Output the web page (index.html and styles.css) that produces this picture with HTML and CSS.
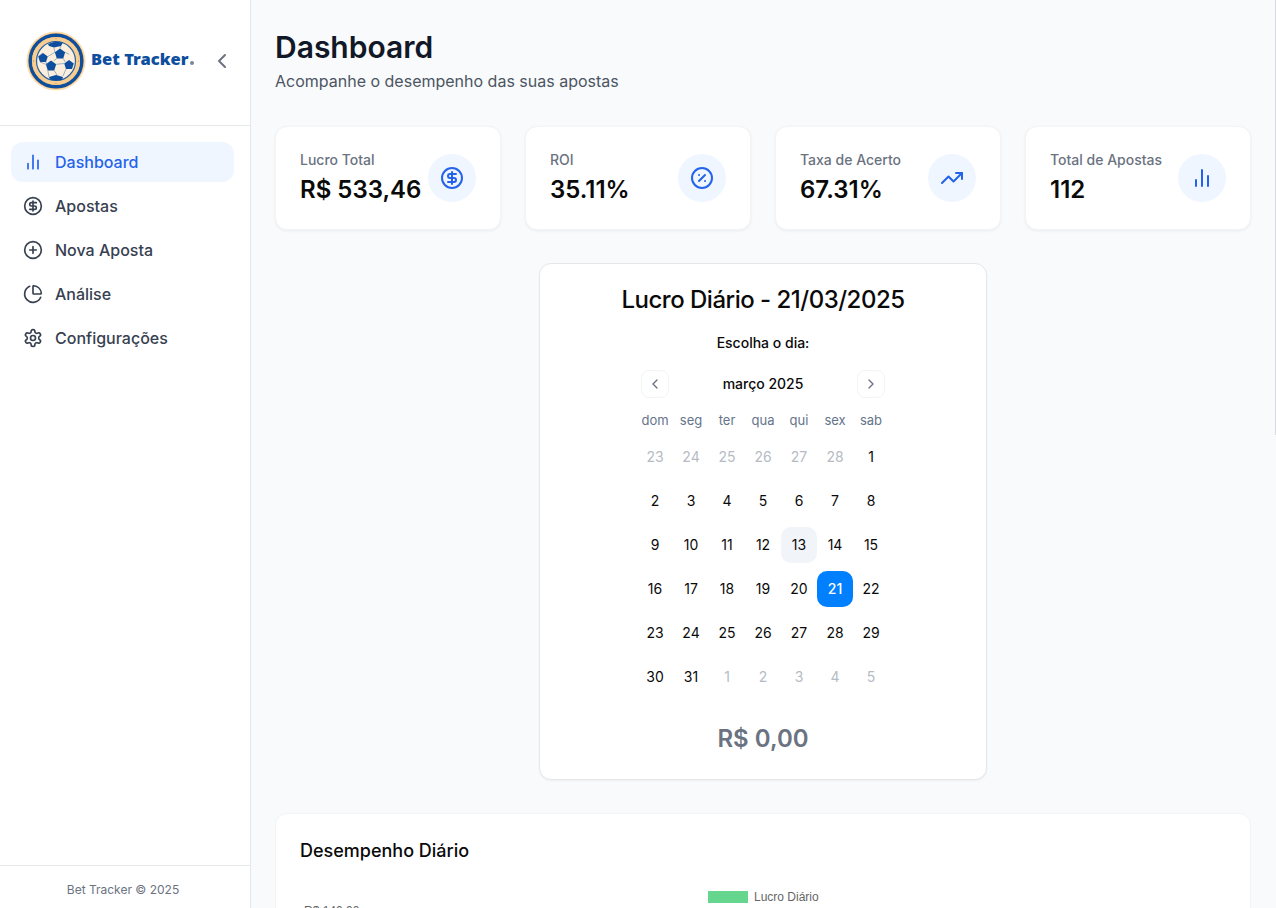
FILE: index.html
```html
<!DOCTYPE html>
<html lang="pt-BR">

<head>
  <meta charset="UTF-8">
  <meta name="viewport" content="width=device-width, initial-scale=1.0">
  <title>Bet Tracker - Dashboard</title>
  <link rel="stylesheet" href="styles.css">
</head>

<body>
  <div class="app">
    <aside class="sidebar">
      <div class="sidebar-header">
        <div class="logo">
          <svg class="logo-ball" viewBox="0 0 60 60" width="60" height="60">
            <circle cx="30" cy="30" r="29.5" fill="#fbdcae" />
            <circle cx="30" cy="30" r="28" fill="#f4b25f" />
            <circle cx="30" cy="30" r="25.8" fill="none" stroke="#0d4f9e" stroke-width="3.4" />
            <circle cx="30" cy="30" r="24" fill="#f7cd92" />
            <circle cx="30" cy="30" r="19.5" fill="#fbeedd" stroke="#2a639f" stroke-width="1.2" />
            <g fill="#9a8a68">
              <circle cx="30" cy="7.5" r=".6" />
              <circle cx="30" cy="52.5" r=".6" />
              <circle cx="7.5" cy="30" r=".6" />
              <circle cx="52.5" cy="30" r=".6" />
            </g>
            <g fill="#0d4f9e">
              <path d="M34 17.5l5.2 3.8-2 6.100h-6.400l-2-6.100z" />
              <path d="M17 22l4.800 3.500-1.800 5.500h-6l-1.800-5.500z" />
              <path d="M25 29.500l5.200 3.800-2 6.100h-6.400l-2-6.100z" />
              <path d="M43 29l4.800 3.500-1.800 5.500h-6l-1.800-5.500z" />
              <path d="M22 13l7-2.400 8 .9-2 3.500-7 1.500-5-1.500z" />
              <path d="M23 46l7-2 7 2-1 3-6 .8-6-1.300z" />
            </g>
            <g fill="none" stroke="#5a86b5" stroke-width=".6">
              <path d="M28 16.500l.8 4.800M35 15l-1 2.500M39.200 21.300l4 2M21.800 25.500l7-4.200M20 31l1 3M30.800 27.400l-3 2.500M37.200 27.400l2 3.500M30.200 33.300l8-.8M28.200 39.400l3 5M21.800 39.400l1.200 6.600M40 38l-3 7M14 31l5.800 2.300M12.200 25.500l4.800-3.500" />
            </g>
          </svg>
          <span class="logo-text">Bet Tracker<i class="logo-mark"></i></span>
        </div>
        <svg class="icon collapse" viewBox="0 0 24 24">
          <path d="M15 18l-6-6 6-6" />
        </svg>
      </div>

      <nav class="nav">
        <a class="nav-item active" href="#">
          <svg class="icon" viewBox="0 0 24 24">
            <path d="M18 20V10M12 20V4M6 20v-6" />
          </svg>
          Dashboard
        </a>
        <a class="nav-item" href="#">
          <svg class="icon" viewBox="0 0 24 24">
            <circle cx="12" cy="12" r="10" />
            <path d="M16 8h-6a2 2 0 1 0 0 4h4a2 2 0 1 1 0 4H8M12 18V6" />
          </svg>
          Apostas
        </a>
        <a class="nav-item" href="#">
          <svg class="icon" viewBox="0 0 24 24">
            <circle cx="12" cy="12" r="10" />
            <path d="M8 12h8M12 8v8" />
          </svg>
          Nova Aposta
        </a>
        <a class="nav-item" href="#">
          <svg class="icon" viewBox="0 0 24 24">
            <path d="M21 12c.552 0 1.005-.449.95-.998a10 10 0 0 0-8.953-8.951c-.55-.055-.998.398-.998.95v8a1 1 0 0 0 1 1z" />
            <path d="M21.21 15.89A10 10 0 1 1 8 2.83" />
          </svg>
          Análise
        </a>
        <a class="nav-item" href="#">
          <svg class="icon" viewBox="0 0 24 24">
            <path d="M12.22 2h-.44a2 2 0 0 0-2 2v.18a2 2 0 0 1-1 1.73l-.43.25a2 2 0 0 1-2 0l-.15-.08a2 2 0 0 0-2.73.73l-.22.38a2 2 0 0 0 .73 2.73l.15.1a2 2 0 0 1 1 1.72v.51a2 2 0 0 1-1 1.74l-.15.09a2 2 0 0 0-.73 2.73l.22.38a2 2 0 0 0 2.73.73l.15-.08a2 2 0 0 1 2 0l.43.25a2 2 0 0 1 1 1.73V20a2 2 0 0 0 2 2h.44a2 2 0 0 0 2-2v-.18a2 2 0 0 1 1-1.73l.43-.25a2 2 0 0 1 2 0l.15.08a2 2 0 0 0 2.73-.73l.22-.39a2 2 0 0 0-.73-2.73l-.15-.08a2 2 0 0 1-1-1.74v-.5a2 2 0 0 1 1-1.74l.15-.09a2 2 0 0 0 .73-2.73l-.22-.38a2 2 0 0 0-2.73-.73l-.15.08a2 2 0 0 1-2 0l-.43-.25a2 2 0 0 1-1-1.73V4a2 2 0 0 0-2-2z" />
            <circle cx="12" cy="12" r="3" />
          </svg>
          Configurações
        </a>
      </nav>

      <div class="sidebar-footer">Bet Tracker © 2025</div>
    </aside>

    <main class="main">
      <header class="page-header">
        <h1>Dashboard</h1>
        <p>Acompanhe o desempenho das suas apostas</p>
      </header>

      <section class="stats">
        <div class="stat-card">
          <div class="stat-text">
            <div class="stat-label">Lucro Total</div>
            <div class="stat-value">R$ 533,46</div>
          </div>
          <div class="stat-icon">
            <svg class="icon" viewBox="0 0 24 24">
              <circle cx="12" cy="12" r="10" />
              <path d="M16 8h-6a2 2 0 1 0 0 4h4a2 2 0 1 1 0 4H8M12 18V6" />
            </svg>
          </div>
        </div>
        <div class="stat-card">
          <div class="stat-text">
            <div class="stat-label">ROI</div>
            <div class="stat-value">35.11%</div>
          </div>
          <div class="stat-icon">
            <svg class="icon" viewBox="0 0 24 24">
              <circle cx="12" cy="12" r="10" />
              <path d="M15 9l-6 6M9 9h.01M15 15h.01" />
            </svg>
          </div>
        </div>
        <div class="stat-card">
          <div class="stat-text">
            <div class="stat-label">Taxa de Acerto</div>
            <div class="stat-value">67.31%</div>
          </div>
          <div class="stat-icon">
            <svg class="icon" viewBox="0 0 24 24">
              <path d="M22 7l-8.5 8.5-5-5L2 17" />
              <path d="M16 7h6v6" />
            </svg>
          </div>
        </div>
        <div class="stat-card">
          <div class="stat-text">
            <div class="stat-label">Total de Apostas</div>
            <div class="stat-value">112</div>
          </div>
          <div class="stat-icon">
            <svg class="icon" viewBox="0 0 24 24">
              <path d="M18 20V10M12 20V4M6 20v-6" />
            </svg>
          </div>
        </div>
      </section>

      <section class="daily-card">
        <h2>Lucro Diário - 21/03/2025</h2>
        <div class="pick-label">Escolha o dia:</div>

        <div class="calendar">
          <div class="month-bar">
            <button class="month-btn" type="button">
              <svg class="icon" viewBox="0 0 24 24"><path d="M15 18l-6-6 6-6" /></svg>
            </button>
            <span class="month-name">março 2025</span>
            <button class="month-btn" type="button">
              <svg class="icon" viewBox="0 0 24 24"><path d="M9 18l6-6-6-6" /></svg>
            </button>
          </div>

          <div class="weekdays">
            <span>dom</span><span>seg</span><span>ter</span><span>qua</span><span>qui</span><span>sex</span><span>sab</span>
          </div>

          <div class="days">
            <span class="day out">23</span><span class="day out">24</span><span class="day out">25</span><span class="day out">26</span><span class="day out">27</span><span class="day out">28</span><span class="day">1</span>
            <span class="day">2</span><span class="day">3</span><span class="day">4</span><span class="day">5</span><span class="day">6</span><span class="day">7</span><span class="day">8</span>
            <span class="day">9</span><span class="day">10</span><span class="day">11</span><span class="day">12</span><span class="day today">13</span><span class="day">14</span><span class="day">15</span>
            <span class="day">16</span><span class="day">17</span><span class="day">18</span><span class="day">19</span><span class="day">20</span><span class="day selected">21</span><span class="day">22</span>
            <span class="day">23</span><span class="day">24</span><span class="day">25</span><span class="day">26</span><span class="day">27</span><span class="day">28</span><span class="day">29</span>
            <span class="day">30</span><span class="day">31</span><span class="day out">1</span><span class="day out">2</span><span class="day out">3</span><span class="day out">4</span><span class="day out">5</span>
          </div>
        </div>

        <div class="daily-value">R$ 0,00</div>
      </section>

      <section class="chart-card">
        <h3>Desempenho Diário</h3>
        <div class="legend"><i class="legend-box"></i>Lucro Diário</div>
        <div class="axis-label">R$ 140,00</div>
      </section>
    </main>

    <div class="scroll-thumb"></div>
  </div>
</body>

</html>
```

FILE: styles.css
```css
* {
  box-sizing: border-box;
}

html,
body {
  margin: 0;
  height: 100%;
  overflow: hidden;
}

body {
  font-family: Inter, "Liberation Sans", sans-serif;
  background: #f9fafb;
  color: #0a0a0a;
}

.app {
  display: flex;
  height: 908px;
  overflow: hidden;
}

.icon {
  width: 20px;
  height: 20px;
  fill: none;
  stroke: currentColor;
  stroke-width: 2;
  stroke-linecap: round;
  stroke-linejoin: round;
  flex-shrink: 0;
}

/* sidebar */
.sidebar {
  width: 251px;
  flex-shrink: 0;
  display: flex;
  flex-direction: column;
  background: #fff;
  border-right: 1px solid #e5e7eb;
}

.sidebar-header {
  height: 126px;
  display: flex;
  align-items: center;
  justify-content: space-between;
  padding: 0 16px 4px 26px;
  border-bottom: 1px solid #e5e7eb;
}

.logo {
  display: flex;
  align-items: center;
  gap: 5px;
}

.logo-text {
  font-family: "Noto Sans", sans-serif;
  font-size: 16.5px;
  font-weight: 900;
  color: #0d4f9e;
  white-space: nowrap;
  margin-top: -5px;
}

.logo-mark {
  display: inline-block;
  width: 4px;
  height: 4px;
  margin-left: 1px;
  border-radius: 50%;
  background: #7a8794;
}

.collapse {
  width: 24px;
  height: 24px;
  color: #6b7280;
}

.nav {
  flex: 1;
  display: flex;
  flex-direction: column;
  gap: 4px;
  padding: 16px 16px 16px 11px;
}

.nav-item {
  display: flex;
  align-items: center;
  gap: 12px;
  height: 40px;
  padding: 0 12px;
  border-radius: 12px;
  font-size: 16px;
  font-weight: 500;
  color: #374151;
  text-decoration: none;
}

.nav-item.active {
  background: #eff6ff;
  color: #2563eb;
}

.sidebar-footer {
  height: 43px;
  display: flex;
  align-items: center;
  justify-content: center;
  padding: 4px 4px 0 0;
  border-top: 1px solid #e5e7eb;
  font-size: 12px;
  color: #6b7280;
}

/* main */
.main {
  flex: 1;
  min-width: 0;
  padding: 29px 25px 0 24px;
}

.page-header h1 {
  margin: 0;
  font-size: 30px;
  line-height: 36px;
  font-weight: 600;
  color: #111827;
}

.page-header p {
  margin: 4px 0 0;
  font-size: 16px;
  line-height: 24px;
  color: #4b5563;
}

.stats {
  display: grid;
  grid-template-columns: repeat(4, 1fr);
  gap: 24px;
  margin-top: 33px;
}

.stat-card {
  display: flex;
  align-items: center;
  justify-content: space-between;
  height: 104px;
  padding: 0 24px;
  background: #fff;
  border: 1px solid #f3f4f6;
  border-radius: 12px;
  box-shadow: 0 1px 3px rgba(0, 0, 0, 0.06);
}

.stat-text {
  padding-bottom: 1px;
}

.stat-label {
  font-size: 14px;
  line-height: 20px;
  font-weight: 500;
  color: #6b7280;
}

.stat-value {
  margin-top: 4px;
  font-size: 24px;
  line-height: 32px;
  font-weight: 600;
  white-space: nowrap;
}

.stat-icon {
  width: 48px;
  height: 48px;
  display: flex;
  align-items: center;
  justify-content: center;
  flex-shrink: 0;
  border-radius: 50%;
  background: #eff6ff;
  color: #2563eb;
}

.stat-icon .icon {
  width: 24px;
  height: 24px;
}

/* daily profit card */
.daily-card {
  width: 448px;
  height: 517px;
  margin: 33px auto 0;
  padding-top: 20px;
  text-align: center;
  background: #fff;
  border: 1px solid #e5e7eb;
  border-radius: 12px;
  box-shadow: 0 1px 2px rgba(0, 0, 0, 0.05);
}

.daily-card h2 {
  margin: 0;
  font-size: 24px;
  line-height: 32px;
  font-weight: 500;
  letter-spacing: -0.5px;
}

.pick-label {
  margin-top: 17px;
  font-size: 14px;
  line-height: 20px;
  font-weight: 500;
}

.calendar {
  width: 252px;
  margin: 17px auto 0;
}

.month-bar {
  display: flex;
  align-items: center;
  justify-content: space-between;
  height: 28px;
  padding: 0 4px;
  font-size: 14px;
  font-weight: 500;
}

.month-name {
  margin-bottom: 1px;
}

.month-btn {
  width: 28px;
  height: 28px;
  display: flex;
  align-items: center;
  justify-content: center;
  padding: 0;
  background: #fff;
  border: 1px solid #f3f4f6;
  border-radius: 8px;
  color: #6b7280;
}

.month-btn .icon {
  width: 16px;
  height: 16px;
}

.weekdays {
  display: grid;
  grid-template-columns: repeat(7, 36px);
  margin-top: 12px;
  font-size: 13px;
  line-height: 20px;
  color: #64748b;
}

.days {
  display: grid;
  grid-template-columns: repeat(7, 36px);
  grid-auto-rows: 36px;
  row-gap: 8px;
  margin-top: 9px;
}

.day {
  display: flex;
  align-items: center;
  justify-content: center;
  padding-bottom: 2px;
  font-size: 14px;
  border-radius: 10px;
}

.day.out {
  color: #b6bbc4;
}

.day.today {
  background: #f1f4f9;
}

.day.selected {
  background: #0080ff;
  color: #fff;
  font-weight: 500;
}

.daily-value {
  margin-top: 28px;
  font-size: 24px;
  line-height: 32px;
  font-weight: 600;
  color: #6b7280;
}

/* chart card */
.chart-card {
  position: relative;
  height: 400px;
  margin-top: 33px;
  padding: 25px 24px;
  background: #fff;
  border: 1px solid #f3f4f6;
  border-radius: 12px;
}

.chart-card h3 {
  margin: 0;
  font-size: 18px;
  line-height: 24px;
  font-weight: 500;
}

.legend {
  position: absolute;
  left: 432px;
  top: 76px;
  display: flex;
  align-items: center;
  gap: 6px;
  font-family: "Liberation Sans", sans-serif;
  font-size: 12px;
  color: #666;
}

.legend-box {
  width: 40px;
  height: 12px;
  background: #66d68f;
}

.axis-label {
  position: absolute;
  left: 28px;
  top: 90px;
  font-family: "Liberation Sans", sans-serif;
  font-size: 12px;
  color: #666;
}

.scroll-thumb {
  position: fixed;
  top: 0;
  right: 0;
  width: 1px;
  height: 435px;
  background: #d9dadd;
}
```
